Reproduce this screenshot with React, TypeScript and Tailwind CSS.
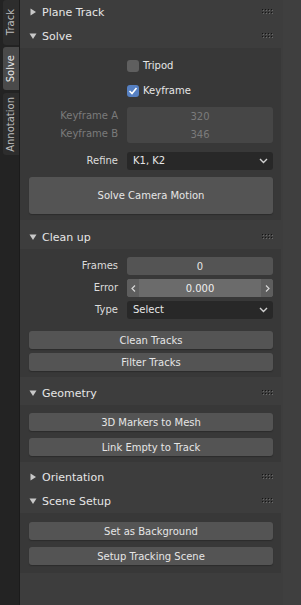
import React from 'react';

// Sidebar tabs on the left edge
const TABS = [
  { name: 'Track', h: 'h-[45px]', mt: 'mt-0', active: false },
  { name: 'Solve', h: 'h-[43px]', mt: 'mt-[2px]', active: true },
  { name: 'Annotation', h: 'h-[62px]', mt: 'mt-[3px]', active: false },
];

const Grip = () => (
  <svg width="12" height="6" viewBox="0 0 12 6">
    {[0, 3, 6, 9].map(x =>
      [0, 3].map(y => (
        <g key={`${x}-${y}`}>
          <rect x={x} y={y} width="1" height="1" fill="#151515" />
          <rect x={x + 1} y={y + 1} width="1" height="1" fill="#6a6a6a" />
        </g>
      ))
    )}
  </svg>
);

const Arrow = ({ open }: { open: boolean }) => (
  <svg width="8" height="8" viewBox="0 0 8 8">
    {open ? <polygon points="0.5,1.5 7.5,1.5 4,7" fill="#c8c8c8" /> : <polygon points="1.5,0.5 7,4 1.5,7.5" fill="#c8c8c8" />}
  </svg>
);

function Header({ title, open }: { title: string; open: boolean }) {
  return (
    <div className="flex items-center h-[24px] pl-[9px] pr-[9px]">
      <div className="w-[8px] flex items-center">
        <Arrow open={open} />
      </div>
      <span className="ml-[5px] text-[11px] text-[#e6e6e6] leading-none flex-1">{title}</span>
      <Grip />
    </div>
  );
}

const Chevron = () => (
  <svg width="9" height="6" viewBox="0 0 9 6">
    <polyline points="1,1 4.5,4.5 8,1" fill="none" stroke="#d0d0d0" strokeWidth="1.4" />
  </svg>
);

function Label({ text, dim }: { text: string; dim?: boolean }) {
  return (
    <span className={`w-[89px] text-right text-[10px] leading-none ${dim ? 'text-[#7b7b7b]' : 'text-[#dcdcdc]'}`}>
      {text}
    </span>
  );
}

function Button({ text, tall }: { text: string; tall?: boolean }) {
  return (
    <div
      className={`flex items-center justify-center rounded-[3px] bg-[#545454] text-[10px] text-[#e6e6e6] shadow-[0_1px_1px_#2c2c2c] ${tall ? 'h-[37px]' : 'h-[18px]'}`}
    >
      {text}
    </div>
  );
}

function Dropdown({ label, value }: { label: string; value: string }) {
  return (
    <div className="flex items-center h-[18px]">
      <Label text={label} />
      <div className="ml-[9px] flex-1 h-full flex items-center justify-between rounded-[3px] bg-[#282828] pl-[6px] pr-[5px]">
        <span className="text-[10px] text-[#e6e6e6] leading-none">{value}</span>
        <Chevron />
      </div>
    </div>
  );
}

function Checkbox({ label, checked }: { label: string; checked: boolean }) {
  return (
    <div className="flex items-center h-[18px] pl-[98px]">
      <div
        className={`w-[12px] h-[12px] rounded-[3px] flex items-center justify-center ${checked ? 'bg-[#5680c2]' : 'bg-[#5f5f5f]'}`}
      >
        {checked && (
          <svg width="10" height="10" viewBox="0 0 10 10">
            <polyline points="1.5,5 4,7.5 8.5,2" fill="none" stroke="#ffffff" strokeWidth="1.6" />
          </svg>
        )}
      </div>
      <span className="ml-[4px] text-[10px] text-[#e6e6e6] leading-none">{label}</span>
    </div>
  );
}

function Body({ children, className }: { children: React.ReactNode; className: string }) {
  return <div className={`mr-[2px] bg-[#383838] pl-[9px] pr-[8px] flex flex-col ${className}`}>{children}</div>;
}

export default function App() {
  return (
    <div className="flex w-[301px] h-[605px] bg-[#3d3d3d] font-['DejaVu_Sans',sans-serif] overflow-hidden select-none">
      {/* Tabs */}
      <div className="w-[20px] h-full bg-[#232323] flex flex-col border-r border-[#1b1b1b]">
        {TABS.map(t => (
          <div
            key={t.name}
            className={`${t.h} ${t.mt} ml-[3px] w-[16px] rounded-l-[3px] flex items-center justify-center ${t.active ? 'bg-[#4a4a4a] text-[#e8e8e8]' : 'bg-[#2d2d2d] text-[#bdbdbd]'}`}
          >
            <span className="[writing-mode:vertical-rl] rotate-180 text-[10px] leading-none">{t.name}</span>
          </div>
        ))}
      </div>

      {/* Panels */}
      <div className="w-[263px] flex flex-col">
        <Header title="Plane Track" open={false} />
        <Header title="Solve" open />
        <Body className="pt-[9px] pb-[6px] h-[172px]">
          <Checkbox label="Tripod" checked={false} />
          <div className="mt-[7px]">
            <Checkbox label="Keyframe" checked />
          </div>
          <div className="mt-[7px] flex">
            <div className="flex flex-col">
              <div className="h-[18px] flex items-center"><Label text="Keyframe A" dim /></div>
              <div className="h-[18px] flex items-center"><Label text="Keyframe B" dim /></div>
            </div>
            <div className="ml-[9px] flex-1 rounded-[3px] bg-[#464646] flex flex-col">
              <div className="h-[18px] flex items-center justify-center text-[10px] text-[#7b7b7b]">320</div>
              <div className="h-[18px] flex items-center justify-center text-[10px] text-[#7b7b7b]">346</div>
            </div>
          </div>
          <div className="mt-[9px]">
            <Dropdown label="Refine" value="K1, K2" />
          </div>
          <div className="mt-[7px]">
            <Button text="Solve Camera Motion" tall />
          </div>
        </Body>

        <div className="mt-[5px]">
          <Header title="Clean up" open />
        </div>
        <Body className="pt-[8px] pb-[6px] h-[128px]">
          <div className="flex items-center h-[18px]">
            <Label text="Frames" />
            <div className="ml-[9px] flex-1 h-full rounded-[3px] bg-[#545454] flex items-center justify-center text-[10px] text-[#e6e6e6]">
              0
            </div>
          </div>
          <div className="mt-[4px] flex items-center h-[18px]">
            <Label text="Error" />
            <div className="ml-[9px] flex-1 h-full rounded-[3px] bg-[#6b6b6b] flex items-center overflow-hidden">
              <div className="w-[12px] h-full bg-[#5e5e5e] flex items-center justify-center">
                <svg width="5" height="7" viewBox="0 0 5 7"><polyline points="4,0.5 1,3.5 4,6.5" fill="none" stroke="#d6d6d6" strokeWidth="1.2" /></svg>
              </div>
              <span className="flex-1 text-center text-[10px] text-[#eeeeee]">0.000</span>
              <div className="w-[12px] h-full bg-[#5e5e5e] flex items-center justify-center">
                <svg width="5" height="7" viewBox="0 0 5 7"><polyline points="1,0.5 4,3.5 1,6.5" fill="none" stroke="#d6d6d6" strokeWidth="1.2" /></svg>
              </div>
            </div>
          </div>
          <div className="mt-[4px]">
            <Dropdown label="Type" value="Select" />
          </div>
          <div className="mt-[12px]">
            <Button text="Clean Tracks" />
          </div>
          <div className="mt-[4px]">
            <Button text="Filter Tracks" />
          </div>
        </Body>

        <div className="mt-[4px]">
          <Header title="Geometry" open />
        </div>
        <Body className="pt-[8px] pb-[6px] h-[57px]">
          <Button text="3D Markers to Mesh" />
          <div className="mt-[7px]">
            <Button text="Link Empty to Track" />
          </div>
        </Body>

        <div className="mt-[3px]">
          <Header title="Orientation" open={false} />
        </div>
        <Header title="Scene Setup" open />
        <Body className="pt-[9px] pb-[8px] h-[60px]">
          <Button text="Set as Background" />
          <div className="mt-[7px]">
            <Button text="Setup Tracking Scene" />
          </div>
        </Body>
      </div>

      <div className="flex-1 bg-[#3f3f3f]" />
    </div>
  );
}
